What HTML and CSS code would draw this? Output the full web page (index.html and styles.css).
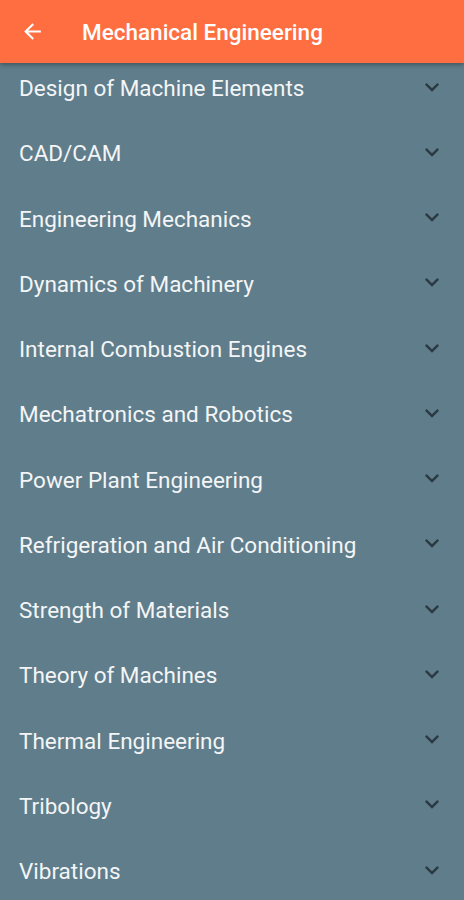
FILE: index.html
```html
<!DOCTYPE html>
<html>
  <head>
    <meta charset="utf-8">
    <meta name="viewport" content="width=device-width, initial-scale=1.0">
    <title>Mechanical Engineering</title>
    <link rel="stylesheet" href="styles.css">
  </head>
  <body>
    <div class="toolbar">
      <svg class="back" viewBox="0 0 24 24"><path d="M20 11H7.83l5.59-5.59L12 4l-8 8 8 8 1.41-1.41L7.83 13H20v-2z"/></svg>
      <h1 class="title">Mechanical Engineering</h1>
    </div>
    <div class="list">
      <div class="item"><span>Design of Machine Elements</span><svg class="more" viewBox="0 0 24 24"><path d="M16.59 8.59L12 13.17 7.41 8.59 6 10l6 6 6-6z"/></svg></div>
      <div class="item"><span>CAD/CAM</span><svg class="more" viewBox="0 0 24 24"><path d="M16.59 8.59L12 13.17 7.41 8.59 6 10l6 6 6-6z"/></svg></div>
      <div class="item"><span>Engineering Mechanics</span><svg class="more" viewBox="0 0 24 24"><path d="M16.59 8.59L12 13.17 7.41 8.59 6 10l6 6 6-6z"/></svg></div>
      <div class="item"><span>Dynamics of Machinery</span><svg class="more" viewBox="0 0 24 24"><path d="M16.59 8.59L12 13.17 7.41 8.59 6 10l6 6 6-6z"/></svg></div>
      <div class="item"><span>Internal Combustion Engines</span><svg class="more" viewBox="0 0 24 24"><path d="M16.59 8.59L12 13.17 7.41 8.59 6 10l6 6 6-6z"/></svg></div>
      <div class="item"><span>Mechatronics and Robotics</span><svg class="more" viewBox="0 0 24 24"><path d="M16.59 8.59L12 13.17 7.41 8.59 6 10l6 6 6-6z"/></svg></div>
      <div class="item"><span>Power Plant Engineering</span><svg class="more" viewBox="0 0 24 24"><path d="M16.59 8.59L12 13.17 7.41 8.59 6 10l6 6 6-6z"/></svg></div>
      <div class="item"><span>Refrigeration and Air Conditioning</span><svg class="more" viewBox="0 0 24 24"><path d="M16.59 8.59L12 13.17 7.41 8.59 6 10l6 6 6-6z"/></svg></div>
      <div class="item"><span>Strength of Materials</span><svg class="more" viewBox="0 0 24 24"><path d="M16.59 8.59L12 13.17 7.41 8.59 6 10l6 6 6-6z"/></svg></div>
      <div class="item"><span>Theory of Machines</span><svg class="more" viewBox="0 0 24 24"><path d="M16.59 8.59L12 13.17 7.41 8.59 6 10l6 6 6-6z"/></svg></div>
      <div class="item"><span>Thermal Engineering</span><svg class="more" viewBox="0 0 24 24"><path d="M16.59 8.59L12 13.17 7.41 8.59 6 10l6 6 6-6z"/></svg></div>
      <div class="item"><span>Tribology</span><svg class="more" viewBox="0 0 24 24"><path d="M16.59 8.59L12 13.17 7.41 8.59 6 10l6 6 6-6z"/></svg></div>
      <div class="item"><span>Vibrations</span><svg class="more" viewBox="0 0 24 24"><path d="M16.59 8.59L12 13.17 7.41 8.59 6 10l6 6 6-6z"/></svg></div>
    </div>
  </body>
</html>
```

FILE: styles.css
```css
* {
box-sizing: border-box;
}
html, body {
margin: 0;
height: 100%;
overflow: hidden;
background-color: #607d8b;
font-family: Roboto, "Noto Sans", sans-serif;
}
.toolbar {
position: relative;
z-index: 1;
display: flex;
align-items: center;
height: 63px;
padding-left: 20px;
background-color: #ff6e40;
box-shadow: 0 2px 4px rgba(0, 0, 0, 0.3);
}
.back {
width: 25px;
height: 25px;
fill: #fff;
}
.title {
margin: 0 0 0 37px;
color: #fff;
font-size: 22.5px;
font-weight: 500;
}
.list {
margin-top: -7.6px;
}
.item {
display: flex;
align-items: center;
justify-content: space-between;
height: 65.25px;
padding: 0 18px 0 19px;
color: #f3f5f6;
font-size: 22.5px;
}
.more {
width: 28px;
height: 28px;
margin-top: -3px;
fill: #2b3a42;
}
```
